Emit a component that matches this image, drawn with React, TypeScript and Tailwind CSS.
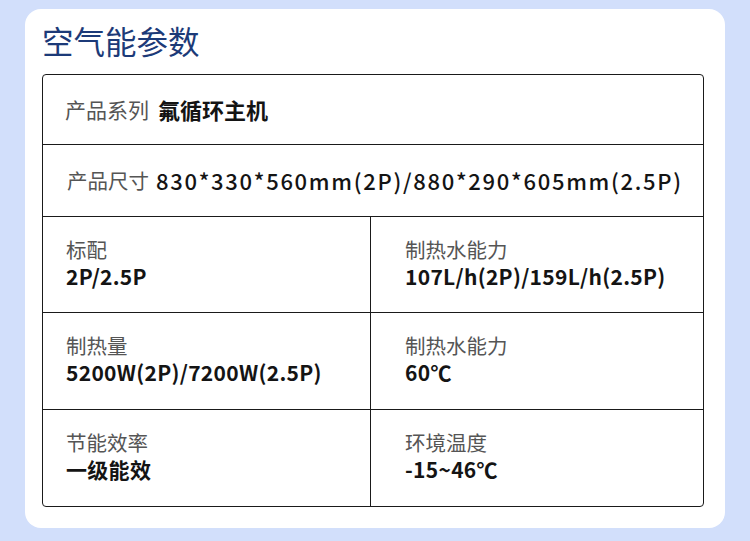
import React from 'react';

const font = { fontFamily: '"Noto Sans CJK SC", "Noto Sans", sans-serif' };

interface CellProps {
  label: string;
  value: string;
  right?: boolean;
}

const Cell: React.FC<CellProps> = ({ label, value, right }) => (
  <div className={`flex flex-col justify-center pb-[4px] ${right ? 'pl-[34px] border-l border-[#1a1a1a]' : 'pl-[23px]'}`}>
    <div className="text-[20.5px] leading-[26px] text-[#555]">{label}</div>
    <div className="text-[21px] leading-[28px] font-bold tracking-[0.3px] text-[#141414]">{value}</div>
  </div>
);

const rows: { cells: [CellProps, CellProps]; h: string }[] = [
  {
    h: 'h-[96px]',
    cells: [
      { label: '标配', value: '2P/2.5P' },
      { label: '制热水能力', value: '107L/h(2P)/159L/h(2.5P)' },
    ],
  },
  {
    h: 'h-[97px]',
    cells: [
      { label: '制热量', value: '5200W(2P)/7200W(2.5P)' },
      { label: '制热水能力', value: '60℃' },
    ],
  },
  {
    h: 'h-[97px]',
    cells: [
      { label: '节能效率', value: '一级能效' },
      { label: '环境温度', value: '-15~46℃' },
    ],
  },
];

const App: React.FC = () => {
  return (
    <div className="w-[750px] h-[541px] bg-[#d2dffb] px-[25px] pt-[9px]" style={font}>
      <div className="bg-white rounded-[16px] pl-[17px] pr-[21px] pt-[11px] pb-[21px]">
        <h2 className="text-[31.5px] leading-[40px] text-[#1c3a78]">空气能参数</h2>
        <div className="mt-[14px] border border-[#1a1a1a] rounded-[4px]">
          <div className="h-[69px] flex items-center pl-[22px]">
            <span className="text-[21px] text-[#555]">产品系列</span>
            <span className="ml-[9px] text-[22px] font-bold text-[#141414]">氟循环主机</span>
          </div>
          <div className="h-[72px] flex items-center pl-[24px] border-t border-[#1a1a1a]">
            <span className="text-[20.5px] text-[#555]">产品尺寸</span>
            <span className="ml-[7px] text-[22px] tracking-[1.7px] text-[#141414] font-medium">830*330*560mm(2P)/880*290*605mm(2.5P)</span>
          </div>
          {rows.map((r, i) => (
            <div key={i} className={`grid grid-cols-[327px_1fr] ${r.h} border-t border-[#1a1a1a]`}>
              <Cell {...r.cells[0]} />
              <Cell {...r.cells[1]} right />
            </div>
          ))}
        </div>
      </div>
    </div>
  );
};

export default App;
